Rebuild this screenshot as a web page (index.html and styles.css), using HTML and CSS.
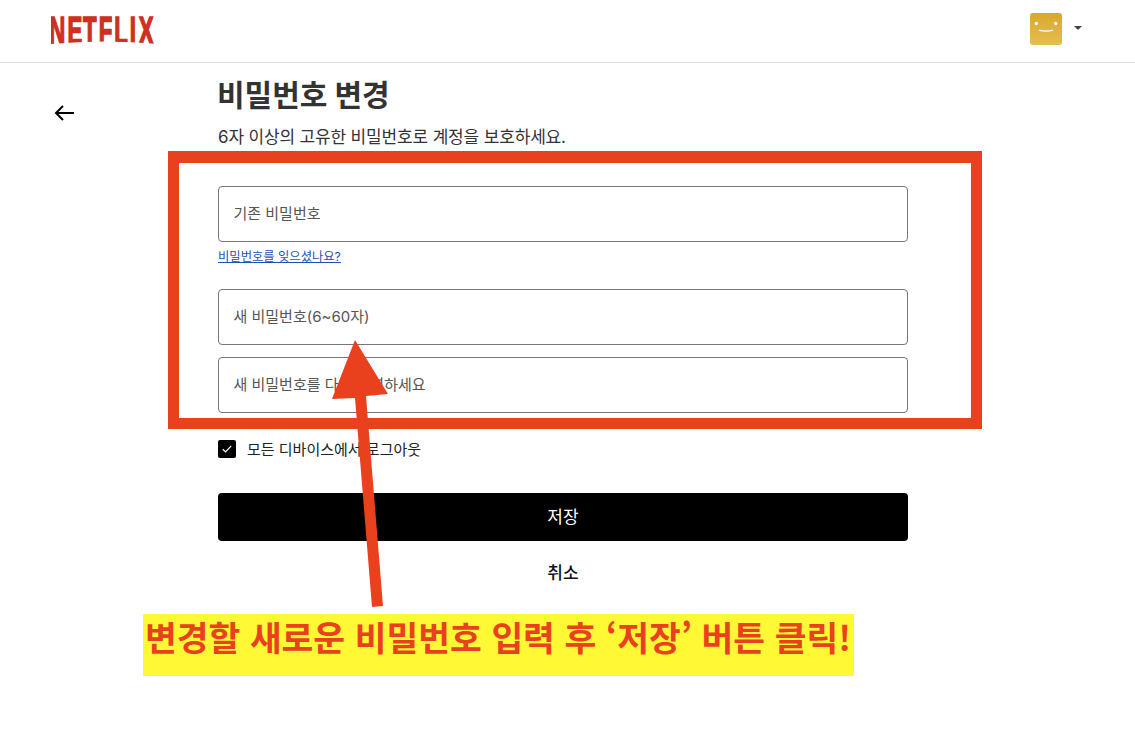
FILE: index.html
```html
<!DOCTYPE html>
<html lang="ko">
<head>
<meta charset="utf-8">
<title>비밀번호 변경</title>
<link rel="stylesheet" href="styles.css">
</head>
<body>
<header class="header">
  <svg class="logo" width="190" height="48" viewBox="0 0 190 48" role="img" aria-label="NETFLIX">
    <text class="logo-text" transform="scale(.57 1)" x="-3 29 56 84 111 138 154" y="31">NETFLIX</text>
    <path d="M0 31Q53 26 108 31V40H0Z" fill="#fff"/>
  </svg>
  <div class="profile">
    <svg class="avatar" width="32" height="32" viewBox="0 0 32 32">
      <defs><linearGradient id="av" x1="0" y1="0" x2="0" y2="1"><stop offset="0" stop-color="#d9a82c"/><stop offset="1" stop-color="#e3bf4e"/></linearGradient></defs>
      <rect width="32" height="32" rx="3" fill="url(#av)"/>
      <circle cx="6.3" cy="10.5" r="1.7" fill="#fff"/>
      <circle cx="25.7" cy="10.5" r="1.7" fill="#fff"/>
      <path d="M13 17.2q7 2 14 0" transform="translate(-4 0)" fill="none" stroke="#fff" stroke-width="1.2"/>
    </svg>
    <span class="caret"></span>
  </div>
</header>
<main class="main">
  <a class="back" aria-label="뒤로">
    <svg width="20" height="16" viewBox="0 0 20 16"><path d="M20 8H2M9 1L2 8l7 7" fill="none" stroke="#000" stroke-width="2"/></svg>
  </a>
  <form class="form">
    <h1 class="title">비밀번호 변경</h1>
    <p class="subtitle">6자 이상의 고유한 비밀번호로 계정을 보호하세요.</p>
    <div class="field">기존 비밀번호</div>
    <a class="forgot">비밀번호를 잊으셨나요?</a>
    <div class="field field-new">새 비밀번호(6~60자)</div>
    <div class="field field-confirm">새 비밀번호를 다시 입력하세요</div>
    <label class="check-row">
      <span class="checkbox">
        <svg width="12" height="10" viewBox="0 0 12 10"><path d="M1.8 5.2l2.8 2.7L10.2 1.8" fill="none" stroke="#fff" stroke-width="1.2"/></svg>
      </span>
      <span class="check-label">모든 디바이스에서 로그아웃</span>
    </label>
    <div class="save">저장</div>
    <div class="cancel">취소</div>
  </form>
</main>
<div class="highlight-box"></div>
<svg class="arrow" width="60" height="270" viewBox="0 0 60 270">
  <polygon points="24,1 57,55 35,57 52,267 41,268 24,59 1,60" fill="#e9411e"/>
</svg>
<div class="caption">변경할 새로운 비밀번호 입력 후 ‘저장’ 버튼 클릭!</div>
</body>
</html>
```
FILE: styles.css
```css
* { box-sizing: border-box; }
html, body { margin: 0; padding: 0; }
body {
  position: relative;
  width: 1135px;
  height: 739px;
  overflow: hidden;
  background: #fff;
  color: #333;
  font-family: "Inter", "Noto Sans CJK KR", sans-serif;
}
.header {
  height: 63px;
  border-bottom: 1px solid #e2e2e2;
  display: flex;
  align-items: flex-start;
  justify-content: space-between;
  padding: 13px 53px 0 51px;
}
.logo { display: block; flex: none; }
.logo-text {
  font-family: "Liberation Sans", sans-serif;
  font-weight: 700;
  font-size: 39px;
  fill: #cf2f22;
  stroke: #cf2f22;
  stroke-width: 1.6px;
}
.profile { display: flex; align-items: center; gap: 12px; height: 32px; }
.avatar { display: block; }
.caret {
  width: 0;
  height: 0;
  border-left: 4px solid transparent;
  border-right: 4px solid transparent;
  border-top: 4px solid #444;
  margin-top: -2px;
}
.main { display: flex; padding-left: 54px; }
.back { display: block; width: 164px; padding-top: 42px; }
.back svg { display: block; }
.form { width: 690px; display: flex; flex-direction: column; }
.title {
  margin: 10px 0 0 -1px;
  font-size: 30px;
  line-height: 44px;
  font-weight: 700;
  color: #333;
}
.subtitle {
  margin: 7px 0 0;
  font-size: 17px;
  line-height: 26px;
  color: #333;
  letter-spacing: -0.16px;
}
.field {
  height: 56px;
  border: 1px solid #767676;
  border-radius: 4px;
  padding: 0 15px 3px 14.5px;
  display: flex;
  align-items: center;
  font-size: 15px;
  color: #555;
  background: #fff;
}
.form > .field:first-of-type { margin-top: 36px; }
.forgot {
  margin-top: 6px;
  height: 18px;
  font-size: 12.3px;
  line-height: 18px;
  color: #1c50b8;
  text-decoration: underline;
}
.field-new { margin-top: 23px; }
.field-confirm { margin-top: 12px; }
.check-row {
  margin-top: 26px;
  display: flex;
  align-items: center;
  gap: 11px;
  height: 20px;
  font-size: 15px;
  color: #222;
}
.check-label { margin-top: -2px; }
.checkbox {
  width: 18px;
  height: 18px;
  border-radius: 2px;
  background: #000;
  display: flex;
  align-items: center;
  justify-content: center;
}
.save {
  margin-top: 34px;
  height: 48px;
  border-radius: 4px;
  background: #000;
  color: #fff;
  display: flex;
  align-items: center;
  justify-content: center;
  padding-bottom: 3px;
  font-size: 17px;
}
.cancel {
  margin-top: 19px;
  height: 26px;
  text-align: center;
  font-size: 17px;
  line-height: 26px;
  font-weight: 500;
  color: #111;
}
.highlight-box {
  position: absolute;
  left: 168px;
  top: 151px;
  width: 814px;
  height: 278px;
  border: solid #e9411e;
  border-width: 12px 11px 11px;
}
.arrow { position: absolute; left: 331px; top: 339px; }
.caption {
  position: absolute;
  left: 143px;
  top: 614px;
  width: 711px;
  height: 62px;
  background: #fff935;
  color: #e9411e;
  font-family: "Noto Sans CJK KR", sans-serif;
  font-size: 34.5px;
  line-height: 44px;
  font-weight: 700;
  padding-left: 2px;
  white-space: nowrap;
}
```
